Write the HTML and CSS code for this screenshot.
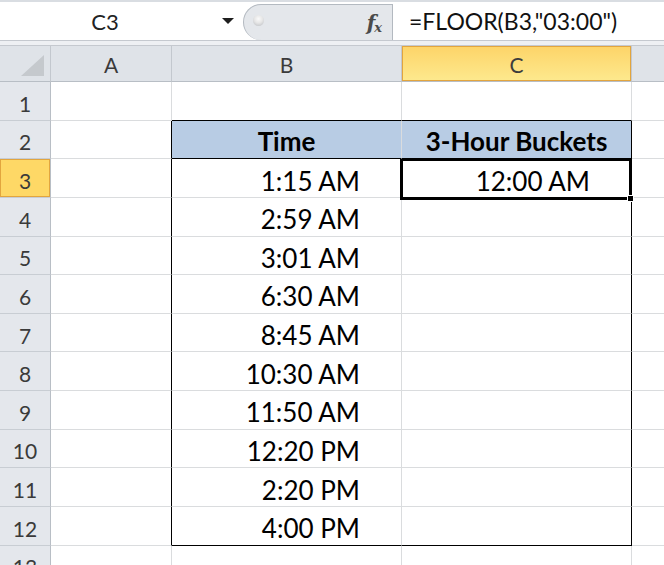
FILE: index.html
```html
<!DOCTYPE html>
<html>
<head>
<meta charset="utf-8">
<link rel="stylesheet" href="styles.css">
</head>
<body>
<div class="formula-bar">
  <div class="namebox"><span class="ref">C3</span><span class="caret"></span></div>
  <div class="fx-area"><span class="knob"></span><span class="fx"><span class="fx-f">f</span><span class="fx-x">x</span></span></div>
  <div class="formula">=FLOOR(B3,"03:00")</div>
</div>
<div class="bar-gap"></div>
<div class="sheet">
  <div class="ch corner"><svg width="23" height="21" viewBox="0 0 23 21"><polygon points="23,0 23,21 0,21" fill="#c5c9cd"/></svg></div>
  <div class="ch">A</div>
  <div class="ch">B</div>
  <div class="ch ch-sel">C</div>
  <div class="ch"></div>

  <div class="rh">1</div><div class="c"></div><div class="c top"></div><div class="c top"></div><div class="c"></div>
  <div class="rh">2</div><div class="c ta"></div><div class="c th">Time</div><div class="c th tc">3-Hour Buckets</div><div class="c"></div>
  <div class="rh rh-sel">3</div><div class="c ta"></div><div class="c">1:15 AM</div><div class="c tc">12:00 AM</div><div class="c"></div>
  <div class="rh">4</div><div class="c ta"></div><div class="c">2:59 AM</div><div class="c tc"></div><div class="c"></div>
  <div class="rh">5</div><div class="c ta"></div><div class="c">3:01 AM</div><div class="c tc"></div><div class="c"></div>
  <div class="rh">6</div><div class="c ta"></div><div class="c">6:30 AM</div><div class="c tc"></div><div class="c"></div>
  <div class="rh">7</div><div class="c ta"></div><div class="c">8:45 AM</div><div class="c tc"></div><div class="c"></div>
  <div class="rh">8</div><div class="c ta"></div><div class="c">10:30 AM</div><div class="c tc"></div><div class="c"></div>
  <div class="rh">9</div><div class="c ta"></div><div class="c">11:50 AM</div><div class="c tc"></div><div class="c"></div>
  <div class="rh">10</div><div class="c ta"></div><div class="c">12:20 PM</div><div class="c tc"></div><div class="c"></div>
  <div class="rh">11</div><div class="c ta"></div><div class="c">2:20 PM</div><div class="c tc"></div><div class="c"></div>
  <div class="rh">12</div><div class="c ta"></div><div class="c last">4:00 PM</div><div class="c tc last"></div><div class="c"></div>
  <div class="rh">13</div><div class="c"></div><div class="c"></div><div class="c"></div><div class="c"></div>

  <div class="selection"></div>
  <div class="fill-handle"></div>
</div>
</body>
</html>
```
FILE: styles.css
```css
html, body {
  margin: 0;
  padding: 0;
}
body {
  width: 664px;
  height: 565px;
  overflow: hidden;
  background: #fff;
  font-family: Lato, "Liberation Sans", sans-serif;
  color: #000;
}
.formula-bar {
  display: flex;
  height: 38px;
  border-top: 2px solid #d9dde2;
  background: #fff;
}
.namebox {
  width: 243px;
  display: flex;
  align-items: center;
}
.namebox .ref {
  width: 210px;
  text-align: center;
  font-size: 22px;
  color: #222;
}
.caret {
  width: 0;
  height: 0;
  margin-left: 12px;
  border-left: 6px solid transparent;
  border-right: 6px solid transparent;
  border-top: 6px solid #1e1e1e;
}
.fx-area {
  width: 150px;
  box-sizing: border-box;
  margin-top: 2px;
  background: #e4e7eb;
  border: 1px solid #b3b9c0;
  border-bottom: none;
  border-radius: 18px 0 0 18px;
  display: flex;
  align-items: center;
  padding-left: 9px;
}
.knob {
  width: 11px;
  height: 11px;
  border-radius: 50%;
  background: radial-gradient(circle at 50% 35%, #fafafa 0%, #e6e6e6 45%, #b9bcc0 100%);
  margin-top: -4px;
}
.fx {
  margin-left: auto;
  margin-right: 10px;
  font-family: "DejaVu Serif", "Liberation Serif", serif;
  font-style: italic;
  font-weight: bold;
  color: #4a4a4a;
  display: flex;
  align-items: baseline;
}
.fx-f {
  font-size: 20px;
}
.fx-x {
  font-size: 13px;
  margin-left: -1px;
  position: relative;
  top: 2px;
}
.formula {
  flex: 1;
  display: flex;
  align-items: center;
  padding-left: 16px;
  font-size: 23px;
  color: #111;
}
.bar-gap {
  height: 4px;
  border-top: 1px solid #c5c9cf;
  border-bottom: 1px solid #c5c9cf;
  background: #eef0f3;
}
.sheet {
  position: relative;
  display: grid;
  grid-template-columns: 51px 121px 230px 230px 1fr;
  grid-template-rows: 36px repeat(13, 38.64px);
}
.ch {
  box-sizing: border-box;
  background: #dfe3e8;
  border-right: 1px solid #c3c8ce;
  border-bottom: 1px solid #b8bec5;
  display: flex;
  align-items: center;
  justify-content: center;
  font-size: 21px;
  color: #3a3a3a;
  padding-top: 2px;
}
.corner {
  align-items: flex-end;
  justify-content: flex-end;
  padding: 0 6px 5px 0;
}
.corner svg {
  display: block;
}
.ch-sel {
  background: linear-gradient(#fdd468, #fde98e);
  box-shadow: inset 0 0 0 1px #e2a53e;
  color: #3c3c3c;
}
.rh {
  box-sizing: border-box;
  background: #e4e7ec;
  border-right: 1px solid #b8bec5;
  border-bottom: 1px solid #c8cdd3;
  display: flex;
  align-items: center;
  justify-content: center;
  font-size: 21px;
  color: #3a3a3a;
  padding-top: 5px;
}
.rh-sel {
  background: #fed866;
  box-shadow: inset 0 0 0 1px #e2a53e;
}
.c {
  box-sizing: border-box;
  border-right: 1px solid #dadcde;
  border-bottom: 1px solid #dadcde;
  display: flex;
  align-items: center;
  justify-content: flex-end;
  padding: 5px 41px 0 0;
  font-size: 26px;
  white-space: nowrap;
}
.top {
  border-bottom-color: #000;
}
.ta {
  border-right-color: #000;
}
.tc {
  border-right-color: #000;
}
.th {
  background: #b8cce4;
  font-weight: 700;
  justify-content: center;
  padding-right: 0;
  padding-top: 4px;
  border-bottom-color: #000;
}
.last {
  border-bottom-color: #000;
}
.selection {
  position: absolute;
  left: 400px;
  top: 113px;
  width: 231px;
  height: 41px;
  box-sizing: border-box;
  border-style: solid;
  border-color: #000;
  border-width: 2px 2px 3px 3px;
  pointer-events: none;
}
.fill-handle {
  position: absolute;
  left: 627px;
  top: 149px;
  width: 7px;
  height: 7px;
  box-sizing: border-box;
  background: #000;
  border: 1px solid #fff;
}
```
